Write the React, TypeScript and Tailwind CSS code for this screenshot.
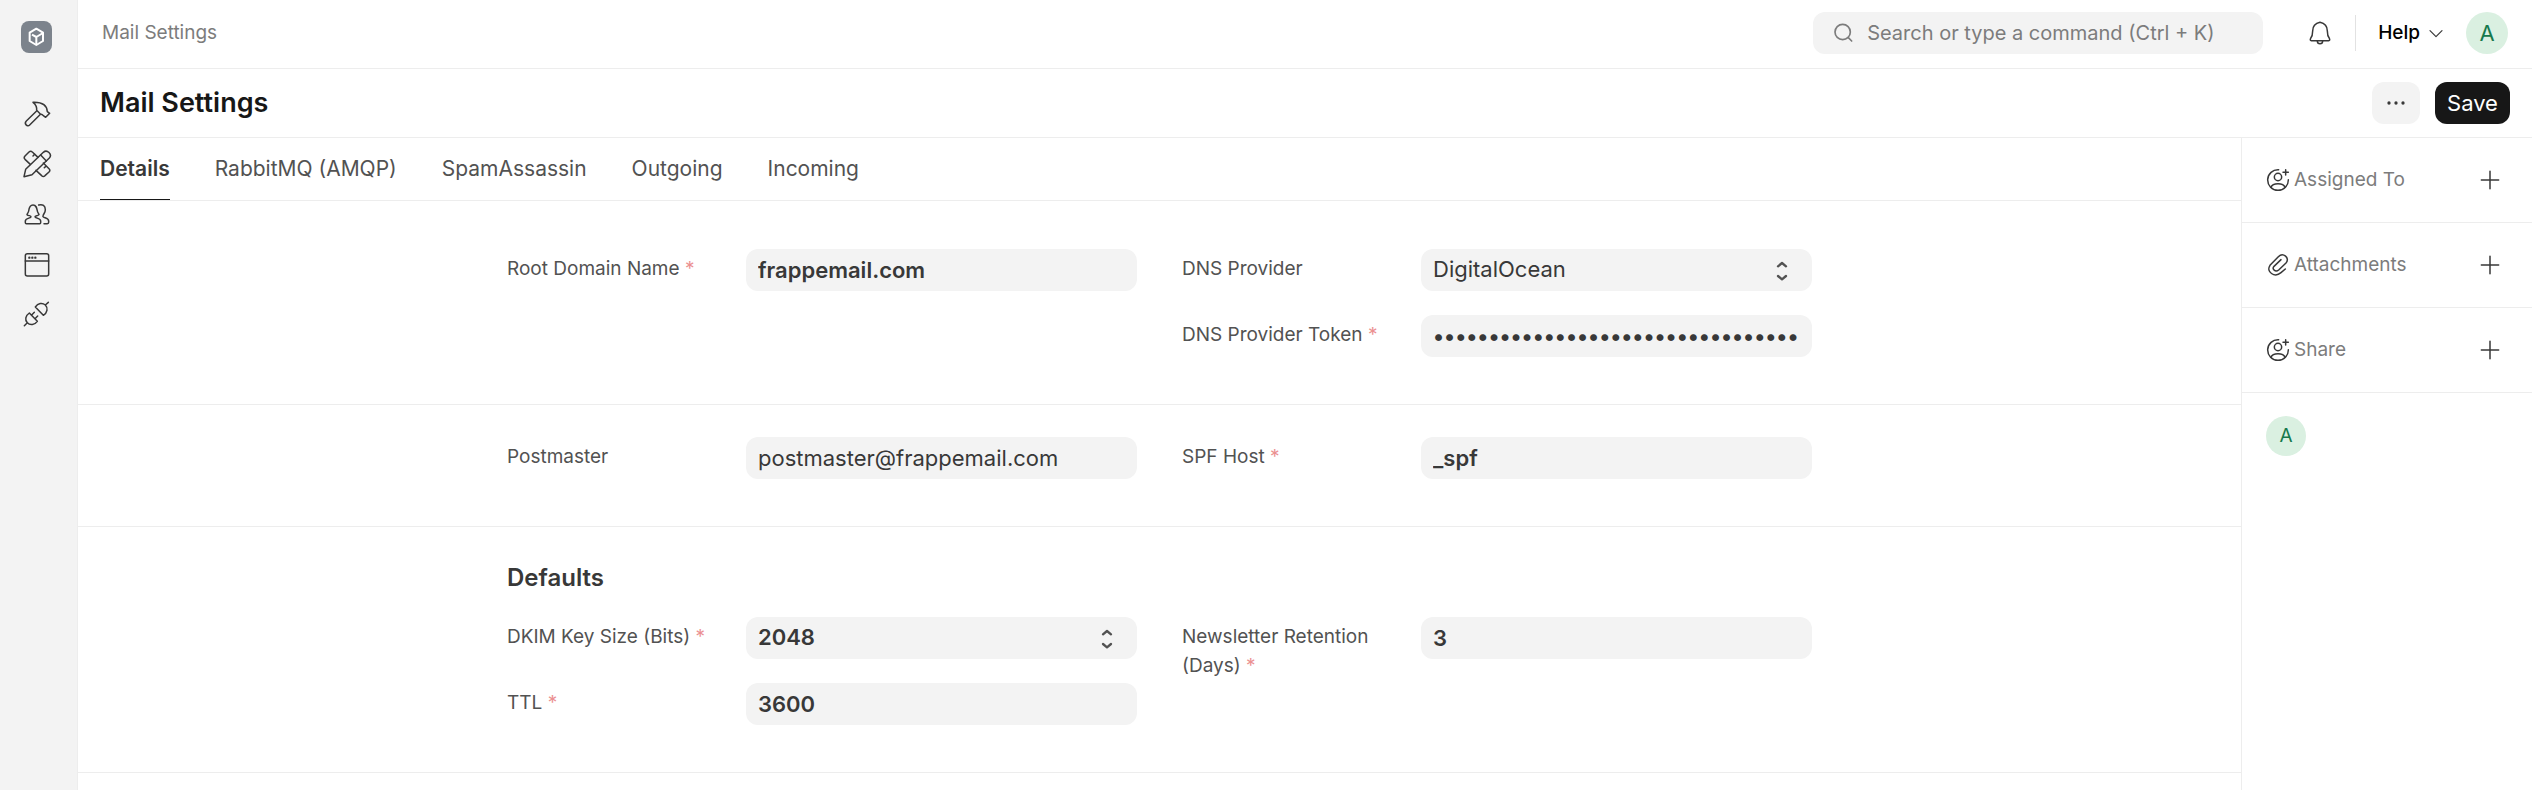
import type { ReactNode } from "react";

const stroke = {
  fill: "none",
  stroke: "currentColor",
  strokeWidth: 4.5,
  strokeLinecap: "round" as const,
  strokeLinejoin: "round" as const,
};

function NavIcon({ label, children }: { label: string; children: ReactNode }) {
  return (
    <a href="#" aria-label={label} className="flex size-[30px] text-[#383838]">
      <svg viewBox="0 0 90 90" className="size-[30px]" {...stroke}>
        {children}
      </svg>
    </a>
  );
}

function Sidebar() {
  return (
    <nav className="flex w-[78px] shrink-0 flex-col items-center border-r border-[#ededed] bg-[#f3f3f3] pt-[21px] pr-1">
      <a href="#" aria-label="Home">
        <svg viewBox="0 0 93 96" className="h-8 w-[31px]">
          <rect width="93" height="96" rx="24" fill="#7c838c" />
          <g fill="none" stroke="#fff" strokeWidth="6" strokeLinejoin="round">
            <path d="M46 23 66 35v25L46 72 26 60V35Z" />
            <path d="M33 41 46 48 66 36M46 48v24" />
          </g>
        </svg>
      </a>
      <div className="mt-[46px] flex flex-col gap-5">
        <NavIcon label="Build">
          <path d="M33 10C42 17 45 24 44 34L55 45C60 46 62 47 64 50L71 55 83 43 76 38C75 18 60 9 33 10Z" />
          <path d="M43 37 13 66C5 74 16 85 23 78L54 47" />
        </NavIcon>
        <NavIcon label="Tools">
          <path d="M6 83 11 61 64 10C75 0 92 16 82 27L30 77Z" />
          <path d="M56 18 73 36M48 25 31 9Q26 4 21 9L9 21Q4 26 9 31L25 46" />
          <path d="M64 42 81 59Q86 64 81 69L69 80Q64 85 59 80L42 64M33 21 38 16M67 56 73 51" />
        </NavIcon>
        <NavIcon label="Users">
          <path d="M33 18C23 18 21 28 20 36 19 42 15 44 15 47 19 51 27 49 27 53 27 58 10 57 10 66V71Q10 74 13 74H53Q56 74 56 71V66C56 57 39 58 39 53 39 49 48 51 51 47 51 44 47 42 46 36 44 26 43 18 33 18Z" />
          <path d="M50 18C62 15 70 20 70 32 70 41 65 44 63 50 60 58 80 54 80 66V70Q80 74 76 74H66" />
        </NavIcon>
        <NavIcon label="Website">
          <rect x="10" y="14" width="70" height="67" rx="6" />
          <path d="M10 36H80" />
          <path d="M22 26h.1M31 26h.1M40 26h.1" strokeWidth="7" />
        </NavIcon>
        <NavIcon label="Integrations">
          <path d="M22 42 46 67C38 78 24 80 16 71 8 63 10 50 22 42ZM7 80 16 71M29 48 37 40M39 59 47 51" />
          <path d="M40 24 64 49C76 41 79 27 70 18 61 10 48 12 40 24ZM70 18 79 10" />
        </NavIcon>
      </div>
    </nav>
  );
}

function Avatar({ small }: { small?: boolean }) {
  return (
    <span
      className={
        small
          ? "flex size-10 items-center justify-center rounded-full bg-[#daf0e1] text-[19px] text-[#16794c]"
          : "flex size-[42px] items-center justify-center rounded-full bg-[#daf0e1] text-[22px] text-[#16794c]"
      }
    >
      A
    </span>
  );
}

function Navbar() {
  return (
    <header className="flex h-[69px] items-center justify-between border-b border-[#ededed] px-6 pb-0.5">
      <a href="#" className="text-[19px] text-[#7c7c7c]">
        Mail Settings
      </a>
      <div className="flex items-center">
        <div className="flex h-[42px] w-[450px] items-center gap-[14px] rounded-xl bg-[#f3f3f3] pl-5 text-[#7c7c7c]">
          <svg viewBox="0 0 60 60" className="size-5" {...stroke} strokeWidth="5">
            <circle cx="29" cy="27" r="23" />
            <path d="M46 44 56 54" />
          </svg>
          <input
            type="text"
            aria-label="Search or type a command"
            placeholder="Search or type a command (Ctrl + K)"
            className="min-w-0 flex-1 bg-transparent text-xl outline-none placeholder:text-[#7c7c7c]"
          />
        </div>
        <button aria-label="Notifications" className="ml-[45px] text-[#383838]">
          <svg viewBox="0 0 72 72" className="size-6" {...stroke}>
            <path d="M36 4C22 7 14 17 14 30C14 44 13 46 8 52Q5 59 10 59H62Q67 59 64 52C59 46 58 44 58 30C58 17 50 7 36 4Z" />
            <path d="M28 60C28 71 44 71 44 60" />
          </svg>
        </button>
        <span className="ml-[23px] h-9 w-px bg-[#e2e2e2]" />
        <button className="ml-[22px] flex items-center gap-2 text-[19px] font-medium text-black">
          Help
          <svg viewBox="0 0 48 48" className="size-4 text-[#383838]" {...stroke} strokeWidth="3.5">
            <path d="M6 17 24 35 42 17" />
          </svg>
        </button>
        <button aria-label="Account" className="ml-[22px]">
          <Avatar />
        </button>
      </div>
    </header>
  );
}

function PageHead() {
  return (
    <div className="flex h-[69px] items-center justify-between border-b border-[#ededed] px-[22px]">
      <h1 className="text-[27px] font-semibold text-[#171717]">Mail Settings</h1>
      <div className="flex gap-[15px]">
        <button
          aria-label="More actions"
          className="flex h-[42px] w-12 items-center justify-center rounded-xl bg-[#f3f3f3] text-[#383838]"
        >
          <svg viewBox="0 0 60 12" className="h-1 w-5" fill="currentColor">
            <circle cx="9" cy="6" r="5" />
            <circle cx="30" cy="6" r="5" />
            <circle cx="51" cy="6" r="5" />
          </svg>
        </button>
        <button className="h-[42px] w-[75px] rounded-xl bg-[#171717] text-[22px] text-white">Save</button>
      </div>
    </div>
  );
}

const tabs = ["Details", "RabbitMQ (AMQP)", "SpamAssassin", "Outgoing", "Incoming"];

function Tabs() {
  return (
    <div role="tablist" className="flex h-[63px] gap-[45px] border-b border-[#ededed] px-[22px]">
      {tabs.map((tab, i) => (
        <button
          key={tab}
          role="tab"
          aria-selected={i === 0}
          className={
            i === 0
              ? "border-b border-[#171717] text-[21px] font-semibold text-[#383838]"
              : "border-b border-transparent text-[21px] text-[#525252]"
          }
        >
          {tab}
        </button>
      ))}
    </div>
  );
}

type FieldProps = {
  id: string;
  label: string;
  value: string;
  required?: boolean;
  kind?: "text" | "password" | "select";
};

function Field({ id, label, value, required, kind = "text" }: FieldProps) {
  return (
    <div className="grid grid-cols-[239px_1fr] items-start">
      <label htmlFor={id} className="pt-[5px] pr-8 text-[19px] leading-[29px] text-[#525252]">
        {label}
        {required && <span className="text-[#eb9091]"> *</span>}
      </label>
      {kind === "select" ? (
        <div className="relative">
          <select
            id={id}
            defaultValue={value}
            className={
              required
                ? "h-[42px] w-full appearance-none rounded-xl bg-[#f3f3f3] px-3 pb-px text-[22px] font-semibold text-[#383838]"
                : "h-[42px] w-full appearance-none rounded-xl bg-[#f3f3f3] px-3 pb-px text-[22px] text-[#383838]"
            }
          >
            <option>{value}</option>
          </select>
          <svg
            viewBox="0 0 36 60"
            className="pointer-events-none absolute top-3 right-6 h-5 w-3 text-[#525252]"
            {...stroke}
            strokeWidth="7"
          >
            <path d="M6 16 18 6 30 16M6 45 18 55 30 45" />
          </svg>
        </div>
      ) : (
        <input
          id={id}
          type={kind}
          defaultValue={value}
          className={
            required
              ? "h-[42px] w-full rounded-xl bg-[#f3f3f3] px-3 text-[22px] font-semibold text-[#383838]"
              : "h-[42px] w-full rounded-xl bg-[#f3f3f3] px-3 text-[22px] text-[#383838]"
          }
        />
      )}
    </div>
  );
}

function Section({ title, first, left, right }: { title?: string; first?: boolean; left: FieldProps[]; right: FieldProps[] }) {
  return (
    <section className={first ? "border-b border-[#ededed] pt-12 pb-[47px]" : "border-b border-[#ededed] pt-8 pb-[47px]"}>
      <div className="mx-auto max-w-[1305px]">
        {title && <h2 className="mb-5 text-2xl leading-[38px] font-semibold text-[#383838]">{title}</h2>}
        <div className="grid grid-cols-2 gap-[45px]">
          {[left, right].map((fields, i) => (
            <div key={i} className="flex flex-col gap-6">
              {fields.map((f) => (
                <Field key={f.id} {...f} />
              ))}
            </div>
          ))}
        </div>
      </div>
    </section>
  );
}

function PersonPlus() {
  return (
    <svg viewBox="0 0 72 72" className="size-6" {...stroke}>
      <path d="M38 5A31 31 0 1 0 67 35" />
      <circle cx="36" cy="27" r="11" />
      <path d="M15 58C20 44 52 44 57 58M59 5V21M51 13H67" />
    </svg>
  );
}

function Clip() {
  return (
    <svg viewBox="0 0 72 72" className="size-6" {...stroke}>
      <path d="M58 48 45 59C26 75-1 57 12 37L37 11C51-3 73 14 60 30L38 51C28 59 17 48 24 40L45 20" />
    </svg>
  );
}

function SideItem({ icon, label }: { icon: ReactNode; label: string }) {
  return (
    <div className="flex h-[85px] items-center justify-between border-b border-[#ededed] pr-8 pl-6 text-[#383838]">
      <span className="flex items-center gap-1">
        {icon}
        <span className="text-[19px] text-[#7c7c7c]">{label}</span>
      </span>
      <button aria-label={"Add to " + label}>
        <svg viewBox="0 0 60 60" className="size-5" {...stroke}>
          <path d="M30 4V56M4 30H56" />
        </svg>
      </button>
    </div>
  );
}

export default function App() {
  return (
    <div className="flex min-h-screen bg-white font-['Inter',sans-serif] text-[#383838]">
      <Sidebar />
      <div className="flex min-w-0 flex-1 flex-col">
        <Navbar />
        <PageHead />
        <div className="flex flex-1">
          <main className="min-w-0 flex-1">
            <Tabs />
            <Section
              first
              left={[{ id: "domain", label: "Root Domain Name", value: "frappemail.com", required: true }]}
              right={[
                { id: "provider", label: "DNS Provider", value: "DigitalOcean", kind: "select" },
                {
                  id: "token",
                  label: "DNS Provider Token",
                  value: "0123456789012345678901234567890123456789",
                  required: true,
                  kind: "password",
                },
              ]}
            />
            <Section
              left={[{ id: "postmaster", label: "Postmaster", value: "postmaster@frappemail.com" }]}
              right={[{ id: "spf", label: "SPF Host", value: "_spf", required: true }]}
            />
            <Section
              title="Defaults"
              left={[
                { id: "dkim", label: "DKIM Key Size (Bits)", value: "2048", required: true, kind: "select" },
                { id: "ttl", label: "TTL", value: "3600", required: true },
              ]}
              right={[{ id: "retention", label: "Newsletter Retention (Days)", value: "3", required: true }]}
            />
          </main>
          <aside className="w-[291px] shrink-0 border-l border-[#ededed]">
            <SideItem icon={<PersonPlus />} label="Assigned To" />
            <SideItem icon={<Clip />} label="Attachments" />
            <SideItem icon={<PersonPlus />} label="Share" />
            <div className="px-6 pt-[23px]">
              <Avatar small />
            </div>
          </aside>
        </div>
      </div>
    </div>
  );
}
